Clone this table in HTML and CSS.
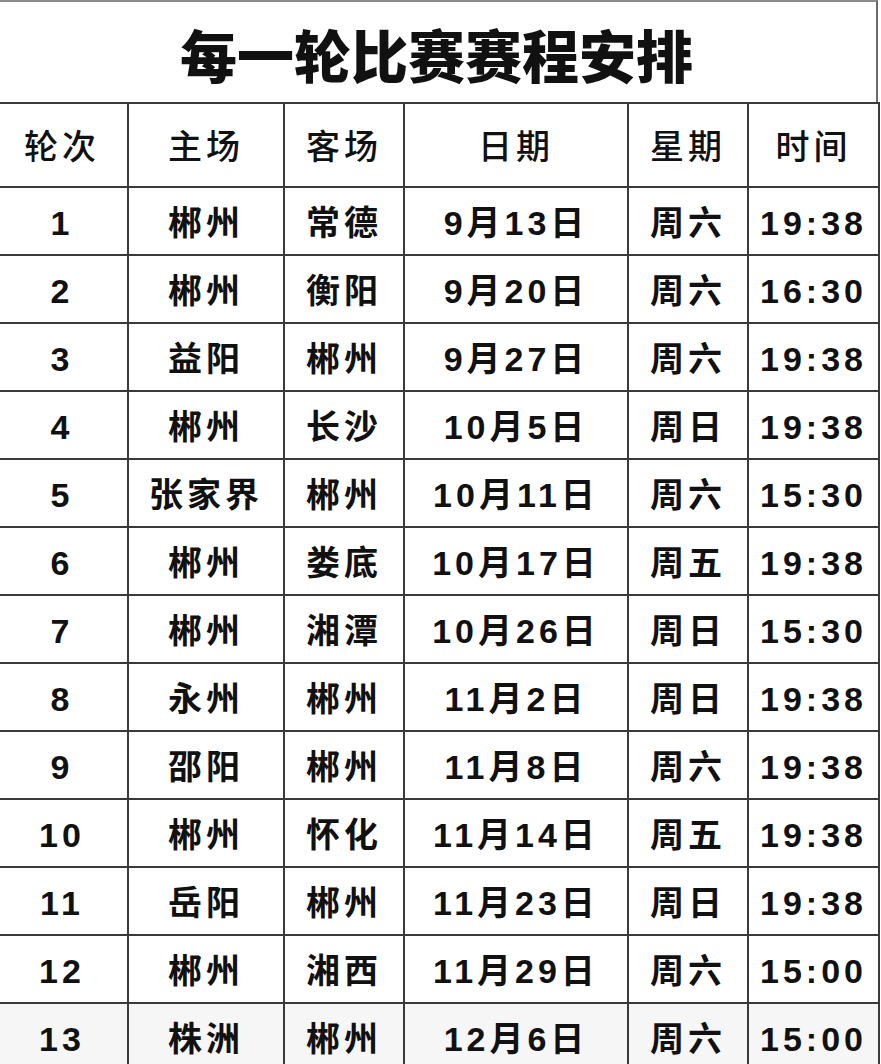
FILE: index.html
```html
<!DOCTYPE html>
<html lang="zh-CN">
<head>
<meta charset="utf-8">
<title>每一轮比赛赛程安排</title>
<link rel="stylesheet" href="styles.css">
</head>
<body>
<div class="sheet">
  <div class="title">每一轮比赛赛程安排</div>
  <table class="schedule">
    <colgroup>
      <col class="c1"><col class="c2"><col class="c3"><col class="c4"><col class="c5"><col class="c6">
    </colgroup>
    <thead>
      <tr><th>轮次</th><th>主场</th><th>客场</th><th>日期</th><th>星期</th><th>时间</th></tr>
    </thead>
    <tbody>
      <tr><td>1</td><td>郴州</td><td>常德</td><td>9月13日</td><td>周六</td><td>19:38</td></tr>
      <tr><td>2</td><td>郴州</td><td>衡阳</td><td>9月20日</td><td>周六</td><td>16:30</td></tr>
      <tr><td>3</td><td>益阳</td><td>郴州</td><td>9月27日</td><td>周六</td><td>19:38</td></tr>
      <tr><td>4</td><td>郴州</td><td>长沙</td><td>10月5日</td><td>周日</td><td>19:38</td></tr>
      <tr><td>5</td><td>张家界</td><td>郴州</td><td>10月11日</td><td>周六</td><td>15:30</td></tr>
      <tr><td>6</td><td>郴州</td><td>娄底</td><td>10月17日</td><td>周五</td><td>19:38</td></tr>
      <tr><td>7</td><td>郴州</td><td>湘潭</td><td>10月26日</td><td>周日</td><td>15:30</td></tr>
      <tr><td>8</td><td>永州</td><td>郴州</td><td>11月2日</td><td>周日</td><td>19:38</td></tr>
      <tr><td>9</td><td>邵阳</td><td>郴州</td><td>11月8日</td><td>周六</td><td>19:38</td></tr>
      <tr><td>10</td><td>郴州</td><td>怀化</td><td>11月14日</td><td>周五</td><td>19:38</td></tr>
      <tr><td>11</td><td>岳阳</td><td>郴州</td><td>11月23日</td><td>周日</td><td>19:38</td></tr>
      <tr><td>12</td><td>郴州</td><td>湘西</td><td>11月29日</td><td>周六</td><td>15:00</td></tr>
      <tr class="last"><td>13</td><td>株洲</td><td>郴州</td><td>12月6日</td><td>周六</td><td>15:00</td></tr>
    </tbody>
  </table>
</div>
</body>
</html>
```

FILE: styles.css
```css
html, body {
  margin: 0;
  padding: 0;
  background: #ffffff;
}

body {
  overflow: hidden;
  font-family: "Liberation Sans", "Noto Sans CJK SC", sans-serif;
  color: #111111;
}

.sheet {
  width: 883px;
  margin-left: -5px;
}

.title {
  box-sizing: border-box;
  height: 102px;
  border-top: 2px solid #8a8a8a;
  border-right: 2px solid #6a6a6a;
  display: flex;
  align-items: center;
  justify-content: center;
  font-family: "Noto Sans CJK SC", sans-serif;
  font-size: 57px;
  font-weight: 900;
  line-height: 1;
  padding-top: 2px;
  padding-left: 2px;
}

.schedule {
  border-collapse: collapse;
  table-layout: fixed;
  width: 883px;
}

.c1 { width: 132px; }
.c2 { width: 156px; }
.c3 { width: 120px; }
.c4 { width: 224px; }
.c5 { width: 120px; }
.c6 { width: 131px; }

.schedule th,
.schedule td {
  box-sizing: border-box;
  border: 2px solid #3a3a3a;
  text-align: center;
  padding: 3px 0 0;
  line-height: 1;
  letter-spacing: 4px;
  white-space: nowrap;
}

.schedule th {
  height: 84px;
  font-size: 34px;
  font-weight: 500;
}

.schedule td {
  height: 68px;
  font-size: 34px;
  font-weight: 700;
}

.schedule tr.last td {
  background: #f6f6f6;
}
```
